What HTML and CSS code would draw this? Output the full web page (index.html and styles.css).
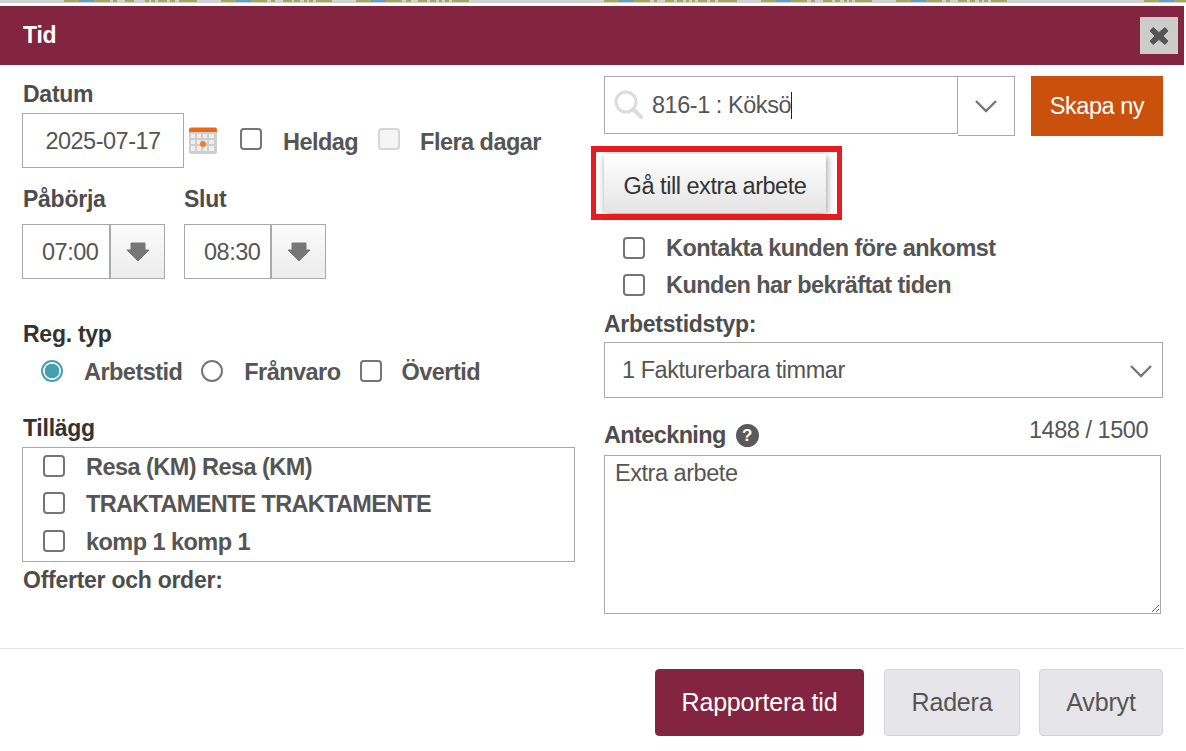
FILE: index.html
```html
<!DOCTYPE html>
<html lang="sv">
<head>
<meta charset="utf-8">
<title>Tid</title>
<link rel="stylesheet" href="styles.css">
</head>
<body>
<div class="strip">
  <svg class="strip-art" width="1186" height="2" viewBox="0 0 1186 2">
    <g fill="#a8a858">
      <rect x="64" width="46" height="2"/><rect x="113" width="4" height="2"/><rect x="125" width="9" height="2"/><rect x="145" width="4" height="2"/><rect x="151" width="4" height="2"/><rect x="158" width="9" height="2"/><rect x="170" width="5" height="2"/><rect x="179" width="18" height="2"/>
      <rect x="221" width="46" height="2"/><rect x="271" width="4" height="2"/><rect x="283" width="9" height="2"/><rect x="294" width="6" height="2"/><rect x="304" width="3" height="2"/><rect x="309" width="4" height="2"/><rect x="316" width="16" height="2"/>
      <rect x="356" width="46" height="2"/><rect x="406" width="5" height="2"/><rect x="418" width="9" height="2"/><rect x="430" width="6" height="2"/><rect x="439" width="3" height="2"/><rect x="445" width="4" height="2"/><rect x="452" width="17" height="2"/>
      <rect x="604" width="46" height="2"/><rect x="654" width="3" height="2"/><rect x="665" width="9" height="2"/><rect x="677" width="6" height="2"/><rect x="686" width="3" height="2"/><rect x="692" width="3" height="2"/><rect x="698" width="9" height="2"/><rect x="710" width="5" height="2"/><rect x="718" width="19" height="2"/>
      <rect x="761" width="46" height="2"/><rect x="811" width="4" height="2"/><rect x="823" width="9" height="2"/><rect x="835" width="5" height="2"/><rect x="844" width="3" height="2"/><rect x="849" width="3" height="2"/><rect x="855" width="17" height="2"/>
      <rect x="896" width="46" height="2"/><rect x="946" width="4" height="2"/><rect x="958" width="9" height="2"/><rect x="970" width="5" height="2"/><rect x="979" width="3" height="2"/><rect x="984" width="4" height="2"/><rect x="991" width="16" height="2"/>
      <rect x="1144" width="42" height="2"/>
    </g>
    <g fill="#5f9fcb">
      <rect x="79" width="15" height="2"/><rect x="236" width="15" height="2"/><rect x="371" width="15" height="2"/><rect x="619" width="15" height="2"/><rect x="776" width="15" height="2"/><rect x="911" width="15" height="2"/><rect x="1159" width="15" height="2"/>
    </g>
  </svg>
</div>
<main class="dialog">
  <header class="dialog-head">
    <h1 class="dialog-title">Tid</h1>
    <button class="close" type="button" aria-label="Stäng">
      <svg class="soft" width="20" height="20" viewBox="0 0 20 20"><path d="M4 1.5 L10 6.5 L16 1.5 L19 5 L14 10 L19 15 L16 18.5 L10 13.5 L4 18.5 L1 15 L6 10 L1 5 Z" fill="#555" stroke="#555" stroke-width="1" stroke-linejoin="round"/></svg>
    </button>
  </header>
  <div class="dialog-body">
    <section class="col-left">
      <div class="label lbl-datum">Datum</div>
      <div class="date-row">
        <input class="field date-input" type="text" value="2025-07-17">
        <svg class="cal" width="30" height="29" viewBox="0 0 30 29">
          <rect x="1" y="2" width="28" height="26" rx="2" fill="#cfcfcf"/>
          <g fill="#efefef">
            <rect x="3" y="8" width="4" height="4"/><rect x="9" y="8" width="4" height="4"/><rect x="15" y="8" width="4" height="4"/><rect x="21" y="8" width="5" height="4"/>
            <rect x="3" y="14" width="4" height="4"/><rect x="9" y="14" width="4" height="4"/><rect x="15" y="14" width="4" height="4"/><rect x="21" y="14" width="5" height="4"/>
            <rect x="3" y="20" width="4" height="5"/><rect x="9" y="20" width="4" height="5"/><rect x="15" y="20" width="4" height="5"/><rect x="21" y="20" width="5" height="5"/>
          </g>
          <path d="M1 6 V3.5 Q1 1.5 3 1.5 H27 Q29 1.5 29 3.5 V6 Z" fill="#ea6a14"/>
          <circle cx="15" cy="18" r="3" fill="#f47b20"/>
        </svg>
        <input class="check check-heldag" type="checkbox">
        <span class="opt opt-heldag">Heldag</span>
        <input class="check check-flera" type="checkbox" disabled>
        <span class="opt opt-flera">Flera dagar</span>
      </div>
      <div class="time-labels">
        <span class="label time-label">Påbörja</span>
        <span class="label label-slut">Slut</span>
      </div>
      <div class="time-row">
        <div class="time-group">
          <input class="field time-input" type="text" value="07:00">
          <span class="time-btn"><svg class="soft" width="24" height="20" viewBox="0 0 24 20"><path d="M5 1 H19 V8 H23 L12 19 L1 8 H5 Z" fill="#777" stroke="#777" stroke-linejoin="round"/></svg></span>
        </div>
        <div class="time-group">
          <input class="field time-input" type="text" value="08:30">
          <span class="time-btn"><svg class="soft" width="24" height="20" viewBox="0 0 24 20"><path d="M5 1 H19 V8 H23 L12 19 L1 8 H5 Z" fill="#777" stroke="#777" stroke-linejoin="round"/></svg></span>
        </div>
      </div>
      <div class="label label-dark lbl-reg">Reg. typ</div>
      <div class="reg-row">
        <input class="radio" type="radio" name="reg" checked>
        <span class="opt opt-arbetstid">Arbetstid</span>
        <input class="radio" type="radio" name="reg">
        <span class="opt opt-franvaro">Frånvaro</span>
        <input class="check" type="checkbox">
        <span class="opt opt-overtid">Övertid</span>
      </div>
      <div class="label label-dark lbl-tillagg">Tillägg</div>
      <div class="addon-box">
        <label class="addon"><input class="check" type="checkbox"><span class="opt">Resa (KM) Resa (KM)</span></label>
        <label class="addon"><input class="check" type="checkbox"><span class="opt opt-caps">TRAKTAMENTE TRAKTAMENTE</span></label>
        <label class="addon"><input class="check" type="checkbox"><span class="opt">komp 1 komp 1</span></label>
      </div>
      <div class="label lbl-offer">Offerter och order:</div>
    </section>
    <section class="col-right">
      <div class="search-row">
        <div class="search">
          <svg class="search-ico soft" width="30" height="30" viewBox="0 0 30 30"><circle cx="12" cy="12" r="10" fill="none" stroke="#dcdcdc" stroke-width="3"/><path d="M19 19 L27 27" stroke="#dcdcdc" stroke-width="4" stroke-linecap="round"/></svg>
          <span class="search-text">816-1 : Köksö</span><span class="caret"></span>
        </div>
        <span class="search-drop"><svg width="24" height="14" viewBox="0 0 24 14"><path d="M2 2 L12 12 L22 2" fill="none" stroke="#777" stroke-width="2.4"/></svg></span>
        <button class="btn-create" type="button">Skapa ny</button>
      </div>
      <div class="extra-wrap">
        <button class="btn-extra" type="button">Gå till extra arbete</button>
        <div class="red-box"></div>
      </div>
      <label class="right-check rc-one"><input class="check" type="checkbox"><span class="opt">Kontakta kunden före ankomst</span></label>
      <label class="right-check rc-two"><input class="check" type="checkbox"><span class="opt">Kunden har bekräftat tiden</span></label>
      <div class="label lbl-type">Arbetstidstyp:</div>
      <div class="select">
        <span>1 Fakturerbara timmar</span>
        <svg width="24" height="14" viewBox="0 0 24 14"><path d="M2 2 L12 12 L22 2" fill="none" stroke="#777" stroke-width="2.4"/></svg>
      </div>
      <div class="note-head">
        <span class="label note-label">Anteckning</span>
        <span class="help">?</span>
        <span class="counter">1488 / 1500</span>
      </div>
      <textarea class="note">Extra arbete</textarea>
    </section>
  </div>
  <footer class="dialog-foot">
    <button class="btn btn-primary" type="button">Rapportera tid</button>
    <button class="btn btn-grey btn-radera" type="button">Radera</button>
    <button class="btn btn-grey btn-avbryt" type="button">Avbryt</button>
  </footer>
</main>
</body>
</html>
```

FILE: styles.css
```css
* { box-sizing: border-box; }
html, body { margin: 0; padding: 0; background: #fff; }
body {
  width: 1186px;
  height: 751px;
  overflow: hidden;
  font-family: "Liberation Sans", Arial, sans-serif;
  font-size: 23.5px;
  letter-spacing: -0.46px;
  color: #555;
}
.strip { height: 6px; border-top: 3px solid #d2d2d2; position: relative; }
.strip-art { position: absolute; left: 0; top: -3px; display: block; }
.soft { filter: blur(0.5px); }

.dialog { width: 1184px; }
.dialog-head {
  height: 59px;
  background: #832440;
  display: flex;
  align-items: center;
  justify-content: space-between;
  padding: 0 6px 0 23px;
}
.dialog-title { margin: 0; color: #fff; font-size: 23px; letter-spacing: -0.25px; font-weight: 700; }
.close {
  width: 38px;
  height: 37px;
  border: 0;
  padding: 0;
  background: #ccc;
  display: flex;
  align-items: center;
  justify-content: center;
}
.dialog-body { display: flex; height: 583px; padding-left: 22px; gap: 29px; }
.col-left { width: 553px; }
.col-right { width: 559px; }

.label { display: block; font-weight: 700; font-size: 23px; letter-spacing: -0.26px; line-height: 28px; color: #4d4d4d; padding-left: 1px; }
.label-dark { color: #333; }
.opt { font-weight: 700; font-size: 23.5px; letter-spacing: -0.54px; line-height: 28px; color: #555; white-space: nowrap; }
.opt-caps { letter-spacing: -0.68px; }

.field {
  border: 1px solid #a9a9a9;
  font-family: inherit;
  font-size: 23.5px;
  letter-spacing: -0.5px;
  color: #555;
  background: #fff;
  outline: none;
  border-radius: 0;
}
.check, .radio {
  appearance: none;
  -webkit-appearance: none;
  margin: 0;
  flex: none;
  width: 22px;
  height: 22px;
  background: #fff;
  border: 2px solid #757575;
}
.check { border-radius: 4px; }
.check:disabled { border-color: #d6d6d6; background: #f5f5f5; }
.radio { border-radius: 50%; }
.radio:checked { border-color: #459fb0; background: radial-gradient(circle, #459fb0 0 7px, #fff 7.6px); }

.lbl-datum { margin-top: 15px; }
.date-row { display: flex; align-items: center; height: 55px; margin-top: 5px; }
.date-input { width: 162px; height: 55px; text-align: center; padding: 2px 0 0; }
.cal { margin-left: 4px; filter: blur(0.6px); }
.check-heldag { margin-left: 22px; margin-top: -3px; }
.opt-heldag { margin-left: 21px; padding-top: 2px; }
.check-flera { margin-left: 20px; margin-top: -3px; }
.opt-flera { margin-left: 20px; padding-top: 2px; }

.time-labels { display: flex; margin-top: 17px; }
.time-label { width: 162px; }
.label-slut { padding-left: 0; }
.time-row { display: flex; gap: 19px; margin-top: 11px; }
.time-group { display: flex; height: 55px; }
.time-input { width: 87px; height: 55px; padding: 2px 0 0 19px; border-right: 0; }
.time-group + .time-group .time-input { width: 86px; }
.time-btn {
  width: 56px;
  height: 55px;
  border: 1px solid #a9a9a9;
  border-left: 2px solid #a9a9a9;
  background: linear-gradient(#fbfbfb, #ececec);
  display: flex;
  align-items: center;
  justify-content: center;
}

.lbl-reg { margin-top: 41px; }
.reg-row { display: flex; align-items: center; height: 28px; margin-top: 9px; padding-left: 19px; }
.reg-row .check, .reg-row .radio { margin-top: -1px; }
.reg-row .opt { padding-top: 1px; }
.opt-arbetstid { margin-left: 21px; }
.reg-row .radio + .opt-arbetstid + .radio { margin-left: 19px; }
.opt-franvaro { margin-left: 21px; }
.opt-franvaro + .check { margin-left: 19px; }
.opt-overtid { margin-left: 20px; }

.lbl-tillagg { margin-top: 29px; }
.addon-box {
  height: 115px;
  margin-top: 5px;
  border: 1px solid #a9a9a9;
  padding: 0 0 1px 20px;
  display: flex;
  flex-direction: column;
  justify-content: center;
  gap: 9.5px;
}
.addon { display: flex; align-items: center; gap: 21px; height: 28px; }
.addon .check { margin-top: -2px; }
.lbl-offer { margin-top: 4px; }

.search-row { display: flex; align-items: flex-start; margin-top: 11px; height: 60px; }
.search {
  width: 354px;
  height: 58px;
  border: 1px solid #a9a9a9;
  display: flex;
  align-items: center;
  padding-left: 9px;
  padding-top: 1px;
}
.search-ico { flex: none; margin-top: -1px; }
.search-text { margin-left: 8px; }
.caret { width: 1px; height: 27px; background: #222; margin-left: 0; }
.search-drop {
  width: 57px;
  height: 60px;
  border: 1px solid #a9a9a9;
  border-left: 0;
  display: flex;
  align-items: center;
  justify-content: center;
}
.btn-create {
  width: 132px;
  height: 60px;
  margin-left: 16px;
  border: 0;
  background: #c9510c;
  color: #fff;
  font-family: inherit;
  font-size: 23.5px;
  letter-spacing: -0.46px;
}

.extra-wrap { position: relative; margin-top: 18px; height: 59px; }
.btn-extra {
  display: block;
  width: 222px;
  height: 59px;
  border: 0;
  padding: 5px 0 0;
  background: linear-gradient(#fff, #e4e4e4);
  box-shadow: 1px 2px 7px rgba(0, 0, 0, 0.4);
  color: #333;
  font-family: inherit;
  font-size: 23.5px;
  letter-spacing: -0.46px;
}
.red-box {
  position: absolute;
  left: -13px;
  top: -8px;
  width: 251px;
  height: 74px;
  border: solid #e81c1f;
  border-width: 6px 5px;
  pointer-events: none;
}
.right-check { display: flex; align-items: center; gap: 21px; height: 28px; padding-left: 19px; }
.right-check .check { margin-top: -1px; }
.rc-one { margin-top: 21px; }
.rc-two { margin-top: 9px; }
.lbl-type { margin-top: 11px; padding-left: 0; }
.select {
  margin-top: 4px;
  height: 56px;
  border: 1px solid #a9a9a9;
  display: flex;
  align-items: center;
  justify-content: space-between;
  padding: 1px 9px 0 17px;
}
.note-head { position: relative; display: flex; align-items: center; height: 28px; margin-top: 23px; }
.note-label { padding-left: 0; font-size: 23.5px; letter-spacing: -0.62px; }
.help {
  width: 23px;
  height: 23px;
  margin-left: 10px;
  border-radius: 50%;
  background: #5a5a5a;
  color: #fff;
  font-size: 17px;
  font-weight: 700;
  letter-spacing: 0;
  text-align: center;
  line-height: 23px;
}
.counter { position: absolute; right: 15px; top: -5px; line-height: 28px; color: #555; }
.note {
  display: block;
  width: 557px;
  height: 159px;
  margin-top: 6px;
  border: 1px solid #a9a9a9;
  border-radius: 0;
  padding: 4px 10px;
  font-family: inherit;
  font-size: 23.5px;
  letter-spacing: -0.46px;
  line-height: 26px;
  color: #555;
  outline: none;
}

.dialog-foot {
  border-top: 1px solid #e5e5e5;
  padding: 20px 21px 0 0;
  display: flex;
  justify-content: flex-end;
  gap: 20px;
}
.btn {
  height: 67px;
  border-radius: 4px;
  font-family: inherit;
  font-size: 25px;
  letter-spacing: -0.18px;
  padding: 0;
}
.btn-primary { width: 209px; background: #832440; color: #fff; border: 1px solid #832440; }
.btn-grey { background: #e6e6ea; color: #555; border: 1px solid #d4d4d8; }
.btn-radera { width: 136px; }
.btn-avbryt { width: 124px; margin-left: -1px; }
```
